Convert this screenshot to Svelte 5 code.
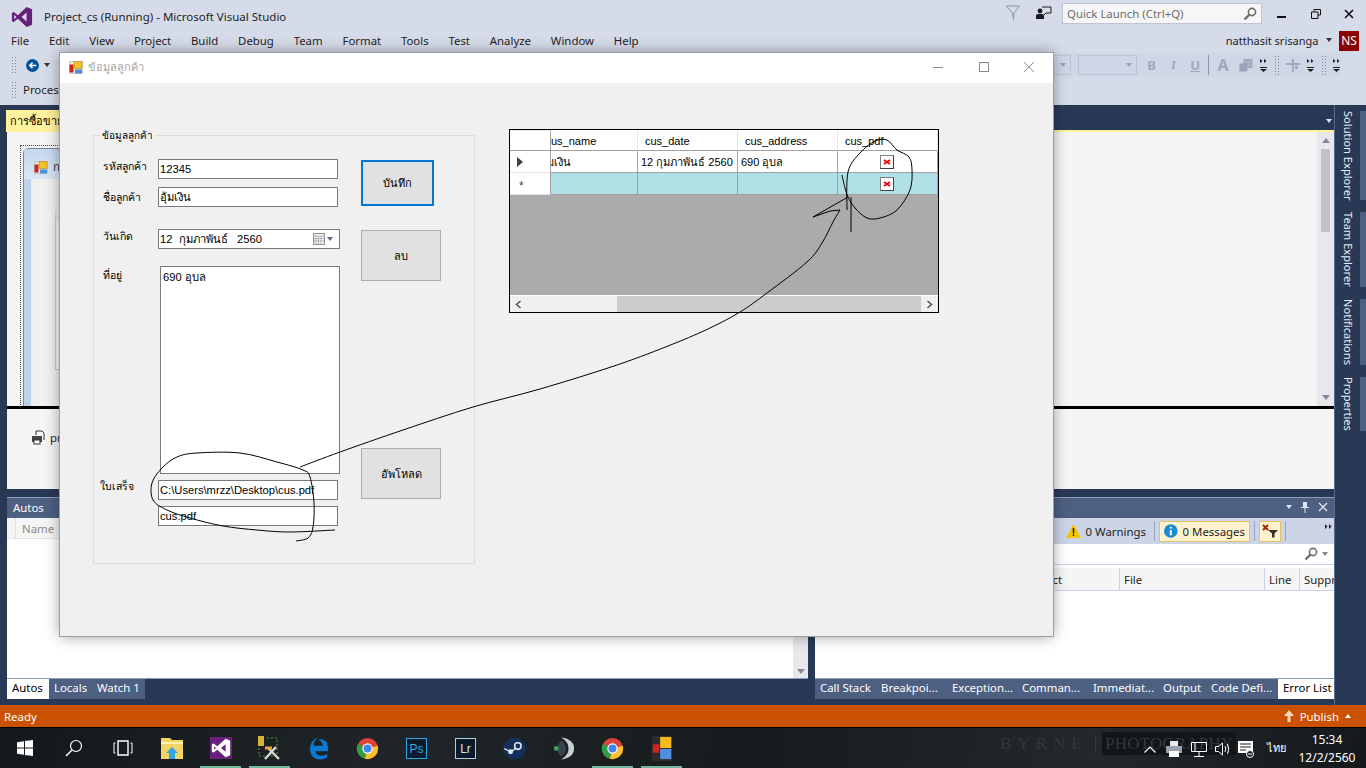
<script>
  const menus = ['File', 'Edit', 'View', 'Project', 'Build', 'Debug', 'Team', 'Format', 'Tools', 'Test', 'Analyze', 'Window', 'Help'];
  const leftTabs = [['Autos', 42], ['Locals', 43], ['Watch 1', 53]];
  const rightTabs = [['Call Stack', 61], ['Breakpoi...', 71], ['Exception...', 70], ['Comman...', 71], ['Immediat...', 70], ['Output', 48], ['Code Defi...', 72], ['Error List', 56]];
  const sideTabs = ['Solution Explorer', 'Team Explorer', 'Notifications', 'Properties'];

  // catmull-rom through the points, the pen marks are not straight segments
  function smooth(p) {
    let d = `M${p[0][0]} ${p[0][1]}`;
    for (let i = 0; i < p.length - 1; i++) {
      const a = p[i - 1] || p[i];
      const b = p[i];
      const c = p[i + 1];
      const e = p[i + 2] || c;
      d += ` C${b[0] + (c[0] - a[0]) / 6} ${b[1] + (c[1] - a[1]) / 6} ${c[0] - (e[0] - b[0]) / 6} ${c[1] - (e[1] - b[1]) / 6} ${c[0]} ${c[1]}`;
    }
    return d;
  }

  // hand drawn marks on top of the screenshot
  const loopLeft = smooth([[296, 541], [308, 538], [313, 527], [314, 503], [310, 477], [303, 470], [277, 462], [240, 453], [197, 453], [177, 457], [162, 468], [152, 483], [153, 500], [167, 510], [190, 518], [223, 526], [257, 530], [290, 532], [335, 530]]);
  const arrowLine = smooth([[300, 467], [340, 452], [403, 430], [473, 407], [540, 389], [617, 365], [673, 344], [710, 328], [740, 312], [767, 293], [807, 262], [822, 243], [833, 222], [840, 210]]);
  const arrowHead = 'M840 210 L830 211 L813 217 L848 197';
  const loopRight = smooth([[842, 175], [845, 188], [848, 197], [855, 208], [867, 218], [880, 218], [897, 210], [910, 190], [912, 170], [909, 157], [897, 150], [887, 140], [875, 141], [860, 153], [848, 172], [847, 210]]);
  const arrowTail = 'M851 197 L851 232';
</script>

{#snippet formIcon()}
  <svg class="form-icon" viewBox="0 0 14 13" width="14" height="13">
    <rect x="0.5" y="0.5" width="13" height="12" fill="#e9e9e9" stroke="#b9b9b9" stroke-width="0.6" />
    <rect x="0.5" y="3.5" width="4" height="8" fill="#c8281e" />
    <rect x="5" y="0.5" width="8" height="7" fill="#f5c02c" stroke="#b58a18" stroke-width="0.6" />
    <rect x="6" y="8.5" width="7" height="4" fill="#4f8fdc" />
  </svg>
{/snippet}

{#snippet chrome()}
  <svg viewBox="0 0 24 24" width="23" height="23">
    <circle cx="12" cy="12" r="11" fill="#db4437" />
    <path d="M12 12 L22.6 9 A11 11 0 0 1 9 22.6 Z" fill="#fbc02d" />
    <path d="M12 12 L9 22.6 A11 11 0 0 1 2 7 Z" fill="#2f9e44" />
    <circle cx="12" cy="12" r="5.4" fill="#fff" />
    <circle cx="12" cy="12" r="4.2" fill="#4285f4" />
  </svg>
{/snippet}

{#snippet chevrons()}
  <svg class="chev" viewBox="0 0 7 15" width="7" height="15">
    <path d="M0 1 L2.5 3 L0 5 Z M4 1 L6.5 3 L4 5 Z" fill="#1e1e1e" />
    <path d="M0 9 H7 V10 H0 Z M0 11 H7 L3.5 14 Z" fill="#1e1e1e" />
  </svg>
{/snippet}

{#snippet brokenImage()}
  <i class="broken"><svg viewBox="0 0 8 8" width="8" height="8"><path d="M1 2 L7 6 M7 2 L1 6" stroke="#e00" stroke-width="1.8" /></svg></i>
{/snippet}

<div class="screen">
  <header class="titlebar">
    <svg class="vs-logo" viewBox="0 0 24 24" width="22" height="22">
      <path fill-rule="evenodd" d="M17 1 L23 3.5 V20.5 L17 23 L7.5 14 L3 17.5 L1 16.5 V7.5 L3 6.5 L7.5 10 Z M17 7 L11.5 12 L17 17 Z M3.5 9.5 V14.5 L6 12 Z" fill="#68217a" />
    </svg>
    <span class="app-title">Project_cs (Running) - Microsoft Visual Studio</span>
    <svg class="funnel" viewBox="0 0 14 16" width="14" height="16">
      <path d="M0.5 1 H13.5 L8 8 L7.5 14.5 L6.5 8 Z" fill="none" stroke="#8d92a0" />
    </svg>
    <svg class="feedback" viewBox="0 0 16 14" width="16" height="14">
      <circle cx="4" cy="5" r="2.4" fill="#1e1e1e" />
      <path d="M0 13 V10 Q0 8 2 8 H6 Q8 8 8 10 V13 Z" fill="#1e1e1e" />
      <path d="M6 1 H15 V7 H10 L8 9" fill="none" stroke="#1e1e1e" />
    </svg>
    <div class="quick">
      <span>Quick Launch (Ctrl+Q)</span>
      <svg viewBox="0 0 14 14" width="14" height="14">
        <circle cx="9" cy="5" r="3.6" fill="none" stroke="#6d6d6d" stroke-width="1.6" />
        <path d="M6.5 7.5 L1.5 12.5" stroke="#6d6d6d" stroke-width="2.4" />
      </svg>
    </div>
    <div class="winbtns">
      <svg viewBox="0 0 10 10" width="10" height="10"><rect x="0" y="7" width="9" height="2" fill="#111" /></svg>
      <svg viewBox="0 0 10 10" width="10" height="10"><path d="M3 2.5 V0.5 H9.5 V6 H7 M0.5 3 H7 V9.5 H0.5 Z" fill="none" stroke="#111" /></svg>
      <svg viewBox="0 0 10 10" width="10" height="10"><path d="M1 1 L9 9 M9 1 L1 9" stroke="#111" stroke-width="1.6" /></svg>
    </div>
  </header>

  <nav class="menubar">
    {#each menus as m}<span>{m}</span>{/each}
    <span class="user">natthasit srisanga</span>
    <i class="caret dark"></i>
    <b class="avatar">NS</b>
  </nav>

  <section class="toolbars">
    <div class="tool-row">
      <i class="gripper"></i>
      <svg class="back" viewBox="0 0 12 12" width="13" height="13">
        <circle cx="6" cy="6" r="6" fill="#00539c" />
        <path d="M9.5 6 H4 M6 3.5 L3.5 6 L6 8.5" fill="none" stroke="#fff" stroke-width="1.5" />
      </svg>
      <i class="caret dark"></i>
      <div class="format-bar">
        <span class="combo small"><i class="caret"></i></span>
        <span class="combo wide"><i class="caret"></i></span>
        <b class="fmt">B</b>
        <em class="fmt">I</em>
        <u class="fmt">U</u>
        <i class="sep"></i>
        <span class="fmt letter-a">A</span>
        <svg viewBox="0 0 14 13" width="14" height="13">
          <rect x="5" y="0.5" width="8" height="8" fill="#aab3c6" stroke="#98a2b8" />
          <rect x="0.5" y="4.5" width="8" height="8" fill="#98a2b8" />
        </svg>
        {@render chevrons()}
        <i class="gripper narrow"></i>
        <svg viewBox="0 0 14 13" width="14" height="13">
          <path d="M0 4 H14 V6 H0 Z M6 0 H8 V13 H6 Z M9 7 H12 V10 H9 Z" fill="#a0a9bc" />
        </svg>
        {@render chevrons()}
        <i class="gripper narrow"></i>
        {@render chevrons()}
      </div>
    </div>
    <div class="tool-row second">
      <i class="gripper"></i>
      <span>Process</span>
    </div>
  </section>

  <main class="workspace">
    <div class="center">
      <div class="doc-tabs">
        <span class="doc-tab">การซื้อขาย.cs</span>
        <i class="caret light tab-menu"></i>
      </div>
      <div class="doc">
        <div class="designer-wrap">
          <div class="designer">
            <div class="selection">
              <div class="dform">
                <div class="dform-title">
                  {@render formIcon()}
                  <span>การซื้อขาย</span>
                </div>
                <div class="dform-client">
                  <div class="dform-box"></div>
                </div>
              </div>
            </div>
          </div>
          <div class="vscroll">
            <i class="tri up"></i>
            <i class="thumb"></i>
            <i class="tri down"></i>
          </div>
        </div>
        <div class="tray">
          <svg viewBox="0 0 15 15" width="15" height="15">
            <path d="M5 5 V1 H11 L13 3 V10" fill="none" stroke="#333" />
            <rect x="1" y="6" width="10" height="6" fill="#444" />
            <rect x="3" y="10" width="6" height="4" fill="#fff" stroke="#333" />
          </svg>
          <span>printDocument1</span>
        </div>
      </div>
      <div class="panels">
        <section class="panel autos">
          <div class="panel-head">Autos</div>
          <div class="autos-cols"><i></i><span>Name</span></div>
          <div class="autos-body"><div class="mini-scroll"><i class="tri down"></i></div></div>
          <div class="panel-tabs">
            {#each leftTabs as [t, w], i}
              <span class:active={i === 0} style="width: {w}px">{t}</span>
            {/each}
          </div>
        </section>
        <section class="panel errors">
          <div class="panel-head">
            <span>Error List</span>
            <i class="caret light"></i>
            <svg viewBox="0 0 10 12" width="10" height="12"><path d="M3 1 H7 V6 H9 V7 H5.5 V12 H4.5 V7 H1 V6 H3 Z" fill="#dfe5f0" /></svg>
            <svg viewBox="0 0 10 10" width="10" height="10"><path d="M1 1 L9 9 M9 1 L1 9" stroke="#dfe5f0" stroke-width="1.4" /></svg>
          </div>
          <div class="err-tools">
            <span class="err-btn warn">
              <svg viewBox="0 0 15 14" width="15" height="14"><path d="M7.5 0 L15 14 H0 Z" fill="#f7c600" /><path d="M6.8 4 H8.2 V9.5 H6.8 Z M6.8 10.5 H8.2 V12 H6.8 Z" fill="#111" /></svg>
              0 Warnings
            </span>
            <i class="tsep"></i>
            <span class="err-btn on msgs">
              <svg viewBox="0 0 14 14" width="14" height="14"><circle cx="7" cy="7" r="7" fill="#1b8bd8" /><path d="M6 6 H8 V11.5 H6 Z M6 2.5 H8 V4.5 H6 Z" fill="#fff" /></svg>
              0 Messages
            </span>
            <i class="tsep"></i>
            <span class="err-btn on filter">
              <svg viewBox="0 0 16 14" width="16" height="14"><path d="M1 1 L6 6 M6 1 L1 6" stroke="#a1260d" stroke-width="2" /><path d="M6 6 H16 L12.5 9.5 V13.5 H10 V9.5 Z" fill="#333" /></svg>
            </span>
            <i class="tsep"></i>
            <span class="more">
              <svg viewBox="0 0 7 5" width="7" height="5"><path d="M0 0 L2.5 2.5 L0 5 Z M4 0 L6.5 2.5 L4 5 Z" fill="#1e1e1e" /></svg>
            </span>
          </div>
          <div class="err-search">
            <svg viewBox="0 0 14 14" width="14" height="14">
              <circle cx="9" cy="5" r="3.6" fill="none" stroke="#6d6d6d" stroke-width="1.6" />
              <path d="M6.5 7.5 L1.5 12.5" stroke="#6d6d6d" stroke-width="2.4" />
            </svg>
            <i class="caret dim"></i>
          </div>
          <div class="err-cols">
            <span class="c-project">Project</span>
            <span class="c-file">File</span>
            <span class="c-line">Line</span>
            <span class="c-supp">Suppr</span>
          </div>
          <div class="err-body"></div>
          <div class="panel-tabs">
            {#each rightTabs as [t, w], i}
              <span class:active={i === rightTabs.length - 1} style="width: {w}px">{t}</span>
            {/each}
          </div>
        </section>
      </div>
    </div>
    <aside class="side">
      {#each sideTabs as t}
        <div class="side-tab"><span>{t}</span></div>
      {/each}
    </aside>
  </main>

  <footer class="status">
    <span>Ready</span>
    <span class="publish">
      <svg viewBox="0 0 10 12" width="10" height="12"><path d="M5 0 L10 6 H6.5 V12 H3.5 V6 H0 Z" fill="#f3d6c0" /></svg>
      Publish
      <i class="caret up-white"></i>
    </span>
  </footer>

  <div class="taskbar">
    <div class="watermark"><span class="w1">BYRNE</span><span class="w2">PHOTOGRAPHY</span></div>
    <div class="tb-item">
      <svg viewBox="0 0 16 16" width="16" height="16"><path d="M0 2.3 L7 1.3 V7.5 H0 Z M8 1.1 L16 0 V7.5 H8 Z M0 8.5 H7 V14.7 L0 13.7 Z M8 8.5 H16 V16 L8 14.9 Z" fill="#fff" /></svg>
    </div>
    <div class="tb-item">
      <svg viewBox="0 0 18 18" width="18" height="18"><circle cx="11" cy="7" r="5.5" fill="none" stroke="#fff" stroke-width="1.2" /><path d="M7 11 L1 17" stroke="#fff" stroke-width="1.4" /></svg>
    </div>
    <div class="tb-item">
      <svg viewBox="0 0 20 16" width="20" height="16"><path d="M5 1 H15 V15 H5 Z" fill="none" stroke="#fff" stroke-width="1.4" /><path d="M2.5 3 H1 V13 H2.5 M17.5 3 H19 V13 H17.5" fill="none" stroke="#fff" /></svg>
    </div>
    <div class="tb-item">
      <svg viewBox="0 0 22 23" width="22" height="23"><path d="M0 1 H9 L11 3 H22 V22 H0 Z" fill="#f6d365" /><path d="M0 5 H22 V7 H0 Z" fill="#fff0b3" /><path d="M8 13 H14 V22 H8 Z" fill="#35a7e0" /><path d="M5 16 L11 10 L17 16 Z" fill="#35a7e0" /></svg>
    </div>
    <div class="tb-item active">
      <svg viewBox="0 0 24 24" width="22" height="24"><rect width="24" height="24" fill="#68217a" /><path fill-rule="evenodd" d="M17 2 L22 4 V20 L17 22 L8 14 L4 17 L2 16 V8 L4 7 L8 10 Z M17 8 L12 12 L17 16 Z M4.5 10 V14 L6.5 12 Z" fill="#fff" /></svg>
    </div>
    <div class="tb-item active">
      <svg viewBox="0 0 26 24" width="26" height="24">
        <rect x="1" y="0" width="6" height="10" fill="#d9b23c" />
        <path d="M10 2 H20 V20 H2 V12" fill="none" stroke="#4c9a3f" stroke-dasharray="2 2" />
        <path d="M8 23 L19 11 M11 12 L22 23" stroke="#d8d8d8" stroke-width="2.4" />
        <path d="M8 12 H15" stroke="#e9a13a" stroke-width="3" />
      </svg>
    </div>
    <div class="tb-item">
      <svg viewBox="0 0 22 24" width="20" height="23">
        <path d="M21 15 H7 Q8 20 14 20 Q18 20 20 18 V22 Q17 24 13 24 Q2 24 1 13 Q1 3 10 0 Q5 4 5 9 H15 Q15 4 10 2 Q21 1 21 12 Z" fill="#0a78d4" />
      </svg>
    </div>
    <div class="tb-item">{@render chrome()}</div>
    <div class="tb-item"><span class="app-tile ps">Ps</span></div>
    <div class="tb-item"><span class="app-tile lr">Lr</span></div>
    <div class="tb-item">
      <svg viewBox="0 0 24 24" width="23" height="23">
        <circle cx="12" cy="12" r="11.5" fill="#14305a" />
        <circle cx="15.5" cy="9.5" r="3.4" fill="none" stroke="#dfe8f2" stroke-width="1.6" />
        <circle cx="8" cy="15.5" r="2.6" fill="#dfe8f2" />
        <path d="M1 12 L8 15.5 L14 11.5" stroke="#dfe8f2" stroke-width="1.4" fill="none" />
      </svg>
    </div>
    <div class="tb-item">
      <svg viewBox="0 0 24 26" width="22" height="25">
        <path d="M9 1 Q23 3 23 13 Q23 23 9 25 Q17 20 17 13 Q17 6 9 1 Z" fill="#c8ced4" />
        <path d="M9 4 Q14 8 14 13 Q14 18 9 22 Q5 19 5 13 Q5 8 9 4 Z" fill="#39434d" />
        <circle cx="3.5" cy="13" r="2.6" fill="#3fa35c" />
      </svg>
    </div>
    <div class="tb-item active">{@render chrome()}</div>
    <div class="tb-item active">
      <svg viewBox="0 0 22 27" width="22" height="25">
        <rect x="0" y="0" width="22" height="27" fill="#2b2b2b" />
        <rect x="9" y="1" width="12" height="12" fill="#f5b81f" />
        <rect x="1" y="9" width="7" height="9" fill="#c8281e" />
        <rect x="9" y="14" width="12" height="11" fill="#4f8fdc" />
      </svg>
    </div>

    <div class="tray-icons">
      <svg viewBox="0 0 12 7" width="12" height="7"><path d="M0.5 6.5 L6 1 L11.5 6.5" fill="none" stroke="#fff" stroke-width="1.2" /></svg>
      <svg class="printer" viewBox="0 0 16 16" width="16" height="16"><rect x="4" y="0" width="8" height="5" fill="#e8e8e8" /><rect x="0" y="5" width="16" height="7" fill="#9aa3ad" /><rect x="3" y="10" width="10" height="6" fill="#fff" /></svg>
      <svg viewBox="0 0 16 15" width="16" height="15"><path d="M0.5 0.5 H15.5 V9.5 H0.5 Z M4 0.5 V9.5 M8 9.5 V14.5 M3 14.5 H13" fill="none" stroke="#fff" /></svg>
      <svg viewBox="0 0 15 14" width="15" height="14"><path d="M0.5 4.5 H3.5 L7.5 1 V13 L3.5 9.5 H0.5 Z M10 4 Q11.5 7 10 10 M12.5 2 Q15 7 12.5 12" fill="none" stroke="#fff" /></svg>
      <svg viewBox="0 0 16 17" width="16" height="17"><path d="M0 0 H15 V12 H0 Z" fill="#fff" /><path d="M2 3 H13 M2 6 H13 M2 9 H8" stroke="#222" /><circle cx="12" cy="13" r="3.5" fill="#1b1f22" stroke="#fff" /><path d="M10 13 H14" stroke="#fff" /></svg>
    </div>
    <span class="lang">ไทย</span>
    <div class="clock"><span>15:34</span><span>12/2/2560</span></div>
  </div>

  <!-- the customer dialog floats over the IDE -->
  <div class="dialog">
    <div class="dlg-title">
      {@render formIcon()}
      <span class="dlg-name">ข้อมูลลูกค้า</span>
      <div class="dlg-btns">
        <svg viewBox="0 0 12 12" width="12" height="12"><path d="M1 6.5 H11" stroke="#8c8c8c" /></svg>
        <svg viewBox="0 0 12 12" width="12" height="12"><rect x="1.5" y="1.5" width="9" height="9" fill="none" stroke="#8c8c8c" /></svg>
        <svg viewBox="0 0 12 12" width="12" height="12"><path d="M1 1 L11 11 M11 1 L1 11" stroke="#8c8c8c" /></svg>
      </div>
    </div>
    <div class="dlg-body">
      <div class="group">
        <span class="legend">ข้อมูลลูกค้า</span>
        <div class="fields">
          <div class="row r1"><label for="cus-id">รหัสลูกค้า</label><input id="cus-id" value="12345" /></div>
          <div class="row r2"><label for="cus-name">ชื่อลูกค้า</label><input id="cus-name" value="อุ้มเงิน" /></div>
          <div class="row r3">
            <span class="lbl">วันเกิด</span>
            <div class="date">
              <span>12 &nbsp;กุมภาพันธ์ &nbsp; 2560</span>
              <svg viewBox="0 0 12 12" width="12" height="12">
                <rect x="0.5" y="0.5" width="11" height="11" fill="#f4f4f4" stroke="#8e8e8e" />
                <path d="M0.5 3 H11.5 M3 3 V11 M5.5 3 V11 M8 3 V11 M1 5.5 H11 M1 8 H11" stroke="#a9a9a9" stroke-width="0.8" />
              </svg>
              <i class="date-caret"></i>
            </div>
          </div>
          <div class="row r4">
            <span class="lbl">ที่อยู่</span>
            <div class="memo">690 อุบล</div>
          </div>
          <div class="row r5"><label for="cus-file">ใบเสร็จ</label><input id="cus-file" value="C:\Users\mrzz\Desktop\cus.pdf" /></div>
          <div class="row r6"><span class="lbl"></span><input value="cus.pdf" aria-label="file name" /></div>
        </div>
        <div class="buttons">
          <button class="save">บันทึก</button>
          <button class="del">ลบ</button>
          <button class="upload">อัพโหลด</button>
        </div>
      </div>

      <div class="grid-view">
        <div class="cells">
          <div class="cell corner"></div>
          <div class="cell head clip">us_name</div>
          <div class="cell head">cus_date</div>
          <div class="cell head">cus_address</div>
          <div class="cell head">cus_pdf</div>

          <div class="cell rowhead"><i class="cur"></i></div>
          <div class="cell clip"><span class="shift">มเงิน</span></div>
          <div class="cell">12 กุมภาพันธ์ 2560</div>
          <div class="cell">690 อุบล</div>
          <div class="cell pdf">{@render brokenImage()}</div>

          <div class="cell rowhead star">*</div>
          <div class="cell blue"></div>
          <div class="cell blue"></div>
          <div class="cell blue"></div>
          <div class="cell blue pdf">{@render brokenImage()}</div>
        </div>
        <div class="grid-empty"></div>
        <div class="hscroll">
          <svg viewBox="0 0 7 9" width="7" height="9"><path d="M5.5 1 L1.5 4.5 L5.5 8" fill="none" stroke="#555" stroke-width="1.6" /></svg>
          <div class="htrack"><i></i></div>
          <svg viewBox="0 0 7 9" width="7" height="9"><path d="M1.5 1 L5.5 4.5 L1.5 8" fill="none" stroke="#555" stroke-width="1.6" /></svg>
        </div>
      </div>
    </div>
  </div>

  <svg class="marks" viewBox="0 0 1366 768" width="1366" height="768">
    <path d={loopLeft} />
    <path d={arrowLine} />
    <path d={arrowHead} />
    <path d={loopRight} />
    <path d={arrowTail} />
  </svg>
</div>

<style>
  :global(body) {
    margin: 0;
    overflow: hidden;
  }

  .screen {
    position: relative;
    width: 1366px;
    height: 768px;
    overflow: hidden;
    display: flex;
    flex-direction: column;
    background: #d6dbe9;
    font-family: "Noto Sans", "Liberation Sans", sans-serif;
    font-size: 11.4px;
    color: #1e1e1e;
  }

  i {
    display: block;
    font-style: normal;
  }

  /* carets */
  .caret {
    width: 0;
    height: 0;
    border-left: 3.5px solid transparent;
    border-right: 3.5px solid transparent;
    border-top: 4px solid #9aa3b8;
  }
  .caret.dark {
    border-top-color: #333;
  }
  .caret.light {
    border-top-color: #dfe5f0;
  }
  .caret.dim {
    border-top-color: #888;
  }
  .caret.up-white {
    border-top: none;
    border-bottom: 4px solid #fff;
  }

  /* title bar */
  .titlebar {
    height: 30px;
    display: flex;
    align-items: flex-start;
    flex: none;
    padding-top: 3px;
    box-sizing: border-box;
  }
  .vs-logo {
    margin-left: 11px;
    margin-top: 3px;
  }
  .app-title {
    margin-left: 11px;
    margin-top: 6px;
    font-size: 11.5px;
  }
  .funnel {
    margin-left: auto;
    margin-top: 2px;
  }
  .feedback {
    margin-left: 16px;
    margin-top: 3px;
  }
  .quick {
    margin-left: 10px;
    width: 200px;
    height: 21px;
    box-sizing: border-box;
    border: 1px solid #bcc4d6;
    background: #f6f6f6;
    display: flex;
    align-items: center;
    justify-content: space-between;
    padding: 0 4px;
    color: #6d6d6d;
  }
  .winbtns {
    width: 104px;
    display: flex;
    gap: 23.5px;
    padding: 6px 0 0 15px;
    box-sizing: border-box;
  }

  /* menu */
  .menubar {
    height: 22px;
    flex: none;
    display: flex;
    align-items: center;
    gap: 19.8px;
    padding: 0 7px 2px 11px;
    box-sizing: border-box;
  }
  .menubar .user {
    margin-left: auto;
    font-size: 11px;
  }
  .menubar .caret {
    margin-left: -12px;
  }
  .avatar {
    margin: 2px 0 0 -13px;
    width: 20px;
    height: 20px;
    background: #8b0000;
    color: #fff;
    font-weight: 400;
    font-size: 12px;
    line-height: 20px;
    text-align: center;
  }

  /* toolbars */
  .toolbars {
    height: 53px;
    flex: none;
    display: flex;
    flex-direction: column;
    gap: 2px;
    padding-top: 1px;
    box-sizing: border-box;
  }
  .tool-row {
    height: 24px;
    display: flex;
    align-items: center;
    gap: 5px;
    padding-left: 11px;
  }
  .tool-row.second {
    gap: 7px;
    padding-bottom: 3px;
    box-sizing: border-box;
  }
  .gripper {
    width: 5px;
    height: 18px;
    background-image: radial-gradient(#7d8598 0.7px, transparent 0.8px);
    background-size: 3px 3px;
  }
  .gripper.narrow {
    height: 20px;
  }
  .back {
    margin-left: 5px;
  }
  .format-bar {
    margin-left: auto;
    width: 288px;
    height: 24px;
    margin-right: 26px;
    background: #cfd6e6;
    display: flex;
    align-items: center;
    gap: 7px;
    color: #a0a9bc;
  }
  .combo {
    height: 20px;
    box-sizing: border-box;
    border: 1px solid #bcc4d6;
    display: flex;
    align-items: center;
    justify-content: flex-end;
    padding-right: 4px;
  }
  .combo.small {
    width: 19px;
  }
  .combo.wide {
    width: 60px;
  }
  .fmt {
    width: 15px;
    text-align: center;
    font-size: 13px;
    font-weight: 700;
    color: #a0a9bc;
  }
  em.fmt {
    font-family: "Liberation Serif", serif;
  }
  .sep {
    width: 1px;
    height: 20px;
    margin-left: -2px;
    background: #8d95a8;
  }
  .letter-a {
    font-size: 16px;
    margin-right: 2px;
  }
  .chev {
    flex: none;
  }

  /* workspace */
  .workspace {
    height: 600px;
    flex: none;
    display: flex;
    background: #293955;
  }
  .center {
    width: 1334px;
    flex: none;
    display: flex;
    flex-direction: column;
    padding-left: 6px;
    box-sizing: border-box;
  }
  .doc-tabs {
    height: 27px;
    flex: none;
    display: flex;
    align-items: flex-end;
    justify-content: space-between;
    border-bottom: 2px solid #fff29d;
    box-sizing: border-box;
  }
  .doc-tab {
    background: #fff29d;
    height: 20px;
    line-height: 21px;
    padding: 0 6px 0 4px;
    font-size: 11px;
    color: #000;
  }
  .tab-menu {
    margin: 0 2px 7px 0;
  }
  .doc {
    height: 357px;
    flex: none;
    background: #f5f5f5;
    display: flex;
    flex-direction: column;
    margin-left: 1px;
  }
  .designer-wrap {
    height: 274px;
    flex: none;
    display: flex;
    border-bottom: 3px solid #000;
    overflow: hidden;
  }
  .designer {
    flex: 1;
    padding: 13px 0 0 13px;
    overflow: hidden;
  }
  .selection {
    width: 900px;
    height: 300px;
    border: 1px dotted #444;
    padding: 2px;
  }
  .dform {
    height: 100%;
    background: #bcd4ec;
    border: 1px solid #7d8794;
    border-radius: 5px 5px 0 0;
    box-sizing: border-box;
    padding: 0 0 0 7px;
  }
  .dform-title {
    height: 30px;
    display: flex;
    align-items: center;
    gap: 5px;
    box-sizing: border-box;
    background: linear-gradient(#c4d8ee, #d9e6f4);
    margin-left: -7px;
    padding: 6px 0 0 10px;
  }
  .dform-client {
    height: 260px;
    background: #f0f0f0;
    padding-top: 29px;
    padding-left: 24px;
  }
  .dform-box {
    height: 148px;
    border: 1px solid #c9c9c9;
    background: #f6f6f6;
    border-top: 13px solid #ededed;
  }
  .vscroll {
    width: 17px;
    flex: none;
    background: #e8e8ec;
    display: flex;
    flex-direction: column;
    align-items: center;
    padding: 6px 0;
    box-sizing: border-box;
  }
  .thumb {
    width: 9px;
    height: 83px;
    margin-top: 6px;
    background: #c2c3c9;
  }
  .tri.up {
    width: 0;
    border-left: 4.5px solid transparent;
    border-right: 4.5px solid transparent;
    border-bottom: 5px solid #868999;
  }
  .tri.down {
    width: 0;
    border-left: 4.5px solid transparent;
    border-right: 4.5px solid transparent;
    border-top: 5px solid #868999;
    margin-top: auto;
  }
  .tray {
    flex: 1;
    display: flex;
    align-items: flex-start;
    gap: 4px;
    padding: 21px 0 0 24px;
    color: #1e1e1e;
  }

  /* lower panels */
  .panels {
    height: 202px;
    flex: none;
    margin-top: 8px;
    margin-left: 1px;
    display: flex;
    gap: 7px;
  }
  .panel {
    display: flex;
    flex-direction: column;
    background: #fff;
    border-top: 1px solid #8e9bb5;
    overflow: hidden;
  }
  .autos {
    width: 801px;
    flex: none;
  }
  .errors {
    width: 519px;
    flex: none;
  }
  .panel-head {
    height: 20px;
    flex: none;
    background: #4d6082;
    color: #fff;
    display: flex;
    align-items: center;
    gap: 8px;
    padding: 0 6px 2px;
    box-sizing: border-box;
  }
  .errors .panel-head span {
    margin-right: auto;
  }
  .autos-cols {
    height: 20px;
    flex: none;
    display: flex;
    align-items: center;
    background: #f5f5f5;
    color: #8a8a8a;
    border-bottom: 1px solid #e0e3ec;
  }
  .autos-cols i {
    width: 8px;
    height: 100%;
    border-right: 1px solid #dcdfe8;
    margin-right: 6px;
  }
  .autos-body {
    flex: 1;
    display: flex;
    justify-content: flex-end;
  }
  .mini-scroll {
    width: 15px;
    background: #e8e8ec;
    display: flex;
    flex-direction: column;
    align-items: center;
    padding-bottom: 4px;
    box-sizing: border-box;
  }
  .panel-tabs {
    height: 21px;
    flex: none;
    display: flex;
    background: #293955;
    border-top: 1px solid #8e9bb5;
    box-sizing: border-box;
    color: #fff;
  }
  .panel-tabs span {
    flex: none;
    box-sizing: border-box;
    background: #4d6082;
    padding-left: 5px;
    line-height: 18px;
    white-space: nowrap;
    overflow: hidden;
  }
  .panel-tabs span.active {
    background: #fff;
    color: #000;
  }
  .err-tools {
    height: 26px;
    flex: none;
    background: #ccd5e8;
    display: flex;
    align-items: center;
    justify-content: flex-end;
    gap: 4px;
  }
  .err-btn {
    display: flex;
    align-items: center;
    gap: 5px;
    height: 21px;
    padding: 0 4px;
    box-sizing: border-box;
    flex: none;
    white-space: nowrap;
  }
  .err-btn.on {
    background: #fff2cc;
    border: 1px solid #e5c365;
  }
  .err-btn.msgs {
    width: 91px;
  }
  .err-btn.filter {
    width: 22px;
    padding: 0 2px;
  }
  .tsep {
    width: 1px;
    height: 20px;
    flex: none;
    background: #99a3b8;
  }
  .more {
    width: 44px;
    height: 100%;
    flex: none;
    display: flex;
    justify-content: flex-end;
    padding: 6px 2px 0 0;
    box-sizing: border-box;
  }
  .err-search {
    height: 21px;
    flex: none;
    display: flex;
    align-items: center;
    justify-content: flex-end;
    gap: 4px;
    padding-right: 6px;
    border-bottom: 1px solid #ccd5e8;
    margin-bottom: 3px;
    box-sizing: border-box;
  }
  .err-cols {
    height: 22px;
    flex: none;
    display: flex;
    align-items: center;
    background: #f5f5f5;
    border-bottom: 1px solid #ccd5e8;
    overflow: hidden;
    justify-content: flex-end;
  }
  .err-cols span {
    height: 100%;
    line-height: 23px;
    padding-left: 4px;
    box-sizing: border-box;
    border-left: 1px solid #ccd5e8;
    white-space: nowrap;
    overflow: hidden;
    flex: none;
  }
  .c-project {
    width: 99px;
  }
  .c-file {
    width: 145px;
  }
  .c-line {
    width: 35px;
  }
  .c-supp {
    width: 35px;
  }
  .err-body {
    flex: 1;
  }

  /* right tool tabs */
  .side {
    flex: 1;
    border-left: 1px solid #5a6c8e;
    padding-top: 6px;
    display: flex;
    flex-direction: column;
    gap: 12px;
    align-items: stretch;
    font-size: 11.1px;
  }
  .side-tab {
    background: linear-gradient(to right, #293955 25px, #4d6082 25px);
    color: #e6ecf5;
  }
  .side-tab span {
    display: block;
    writing-mode: vertical-rl;
    padding-left: 5px;
    white-space: nowrap;
    line-height: 16px;
  }

  /* status */
  .status {
    height: 22px;
    flex: none;
    background: #ca5100;
    color: #fff;
    display: flex;
    align-items: center;
    justify-content: space-between;
    padding: 0 15px 0 4px;
  }
  .publish {
    display: flex;
    align-items: center;
    gap: 6px;
  }

  /* taskbar */
  .taskbar {
    position: relative;
    flex: 1;
    display: flex;
    align-items: stretch;
    background: linear-gradient(100deg, #14181b, #1f2528 30%, #171b1e 55%, #23282b 80%, #15191c);
    border-top: 1px solid #000;
    color: #fff;
  }
  .watermark {
    position: absolute;
    left: 1000px;
    top: 4px;
    display: flex;
    align-items: center;
    font-family: "Liberation Serif", serif;
    font-size: 17px;
    color: #33373a;
  }
  .w1 {
    letter-spacing: 6px;
    width: 96px;
    box-sizing: border-box;
    border-right: 1px solid #33373a;
    white-space: nowrap;
  }
  .w2 {
    margin-left: 6px;
    background: #131618;
    padding: 0 3px;
    height: 23px;
    line-height: 23px;
    letter-spacing: 0.2px;
  }
  .tb-item {
    position: relative;
    width: 41px;
    margin: 0 4px;
    padding-top: 2px;
    flex: none;
    display: flex;
    align-items: center;
    justify-content: center;
    border-bottom: 2px solid transparent;
    box-sizing: border-box;
  }
  .tb-item.active {
    border-bottom-color: #6fb89c;
  }
  .app-tile {
    width: 21px;
    height: 21px;
    line-height: 20px;
    text-align: center;
    font-size: 12px;
    font-family: "Liberation Sans", sans-serif;
    box-sizing: border-box;
    background: #0b1b2c;
  }
  .ps {
    border: 1px solid #2ea8e0;
    color: #2ea8e0;
  }
  .lr {
    border: 1px solid #b5cce0;
    color: #d5e3ef;
  }
  .tray-icons {
    margin-left: auto;
    display: flex;
    align-items: center;
    gap: 8px;
    padding-top: 2px;
    z-index: 1;
  }
  .printer {
    margin-left: 2px;
    margin-right: 1px;
  }
  .lang {
    margin-left: 13px;
    width: 18px;
    align-self: center;
    font-size: 11px;
    white-space: nowrap;
  }
  .clock {
    width: 76px;
    margin-left: 4px;
    margin-right: 1px;
    display: flex;
    flex-direction: column;
    align-items: center;
    justify-content: center;
    gap: 1px;
    font-size: 12px;
    line-height: 17px;
  }

  /* dialog */
  .dialog {
    position: absolute;
    left: 60px;
    top: 53px;
    width: 993px;
    height: 583px;
    background: #f0f0f0;
    box-shadow: 0 0 14px rgba(0, 0, 0, 0.4);
    outline: 1px solid #9a9ea8;
    font-family: "Liberation Sans", sans-serif;
    color: #000;
  }
  .dlg-title {
    height: 30px;
    box-sizing: border-box;
    background: #fff;
    display: flex;
    align-items: center;
    padding: 0 0 2px 9px;
    gap: 5px;
  }
  .dlg-name {
    color: #a6a6a6;
    font-size: 11px;
  }
  .dlg-btns {
    margin-left: auto;
    display: flex;
    gap: 33.5px;
    margin-right: 18px;
  }
  .dlg-body {
    display: flex;
    align-items: flex-start;
    padding: 46px 0 0 33px;
  }
  .group {
    position: relative;
    width: 382px;
    height: 429px;
    margin-top: 6px;
    margin-right: 34px;
    box-sizing: border-box;
    border: 1px solid #dcdcdc;
    padding: 23px 0 0 9px;
    display: flex;
    gap: 21px;
  }
  .legend {
    position: absolute;
    left: 6px;
    top: -7px;
    padding: 0 2px;
    background: #f0f0f0;
    font-size: 10px;
    line-height: 14px;
  }
  .fields {
    width: 237px;
    display: flex;
    flex-direction: column;
  }
  .row {
    display: flex;
    align-items: flex-start;
    font-size: 10.5px;
  }
  .row label,
  .row .lbl {
    width: 55px;
    flex: none;
    box-sizing: border-box;
  }
  .row input {
    width: 180px;
    height: 20px;
    box-sizing: border-box;
    border: 1px solid #7a7a7a;
    background: #fff;
    padding: 0 1px;
    margin: 0;
    font: 11.2px "Liberation Sans", sans-serif;
    color: #000;
    outline: none;
  }
  .r1 label {
    margin-top: -1px;
  }
  .r2 {
    margin-top: 8px;
  }
  .r2 label {
    padding-top: 2px;
  }
  .r3 {
    margin-top: 22px;
  }
  .r3 .lbl {
    margin-top: -1px;
  }
  .r4 {
    margin-top: 17px;
  }
  .r4 .lbl {
    padding-top: 1px;
  }
  .r5 {
    margin-top: 6px;
  }
  .r6 {
    margin-top: 6px;
  }
  .r5 label {
    margin-left: -3px;
    margin-top: -2px;
    width: 58px;
  }
  .date {
    width: 182px;
    height: 20px;
    box-sizing: border-box;
    border: 1px solid #7a7a7a;
    background: #fff;
    display: flex;
    align-items: center;
    padding-left: 1px;
    font-size: 11.2px;
  }
  .date span {
    margin-right: auto;
  }
  .date-caret {
    width: 0;
    border-left: 3.5px solid transparent;
    border-right: 3.5px solid transparent;
    border-top: 4px solid #5d6b8c;
    margin: 0 6px 0 2px;
  }
  .memo {
    width: 180px;
    height: 208px;
    margin-left: 2px;
    box-sizing: border-box;
    border: 1px solid #7a7a7a;
    padding: 1px 2px;
    font-size: 11.2px;
    background: #fff;
  }
  .buttons {
    display: flex;
    flex-direction: column;
    align-items: flex-start;
    padding-top: 1px;
  }
  .buttons button {
    width: 80px;
    height: 51px;
    box-sizing: border-box;
    border: 1px solid #adadad;
    background: #e1e1e1;
    font: 11px "Liberation Sans", sans-serif;
    color: #000;
    padding: 0;
  }
  .buttons .save {
    width: 73px;
    height: 46px;
    border: 2px solid #0078d7;
  }
  .buttons .del {
    margin-top: 24px;
  }
  .buttons .upload {
    margin-top: 167px;
  }

  /* data grid */
  .grid-view {
    width: 430px;
    height: 184px;
    box-sizing: border-box;
    border: 1px solid #000;
    background: #ababab;
    display: flex;
    flex-direction: column;
    font-size: 11px;
  }
  .cells {
    display: grid;
    grid-template-columns: 41px 87px 100px 100px 100px;
    grid-template-rows: 21px 22px 22px;
  }
  .cell {
    box-sizing: border-box;
    border-right: 1px solid #a0a0a0;
    border-bottom: 1px solid #a0a0a0;
    background: #fff;
    display: flex;
    align-items: center;
    padding-left: 3px;
    white-space: nowrap;
    overflow: hidden;
  }
  .cell.head {
    padding: 1px 0 0 7px;
    border-right-color: #e8e8e8;
    border-bottom-color: #a0a0a0;
  }
  .cell.clip {
    padding-left: 0;
  }
  .cell.corner {
    border-right-color: #a0a0a0;
    border-top: 1px solid #e8e8e8;
  }
  .cell.rowhead {
    padding: 0 0 0 7px;
    border-bottom-color: #e3e3e3;
  }
  .star {
    font-size: 12px;
    color: #444;
    padding: 4px 0 0 9px !important;
  }
  .cur {
    width: 0;
    border-top: 5px solid transparent;
    border-bottom: 5px solid transparent;
    border-left: 6px solid #404040;
  }
  .shift {
    margin-left: -4px;
  }
  .cell.blue {
    background: #b0e0e6;
  }
  .cell.pdf {
    justify-content: center;
    padding: 0 2px 0 0;
  }
  .broken {
    width: 14px;
    height: 14px;
    box-sizing: border-box;
    background: #fff;
    border: 1px solid #808080;
    border-right-color: #404040;
    border-bottom-color: #404040;
    display: flex;
    align-items: center;
    justify-content: center;
  }
  .grid-empty {
    flex: 1;
  }
  .hscroll {
    height: 17px;
    flex: none;
    background: #f0f0f0;
    border-top: 1px solid #fff;
    box-sizing: border-box;
    display: flex;
    align-items: center;
    gap: 0;
  }
  .hscroll svg {
    width: 17px;
    flex: none;
  }
  .htrack {
    flex: 1;
    height: 100%;
    display: flex;
    justify-content: flex-end;
  }
  .htrack i {
    width: 304px;
    background: #cdcdcd;
  }

  /* hand drawn annotation */
  .marks {
    position: absolute;
    left: 0;
    top: 0;
    pointer-events: none;
  }
  .marks path {
    fill: none;
    stroke: #000;
    stroke-width: 1;
    stroke-linejoin: round;
  }
</style>
